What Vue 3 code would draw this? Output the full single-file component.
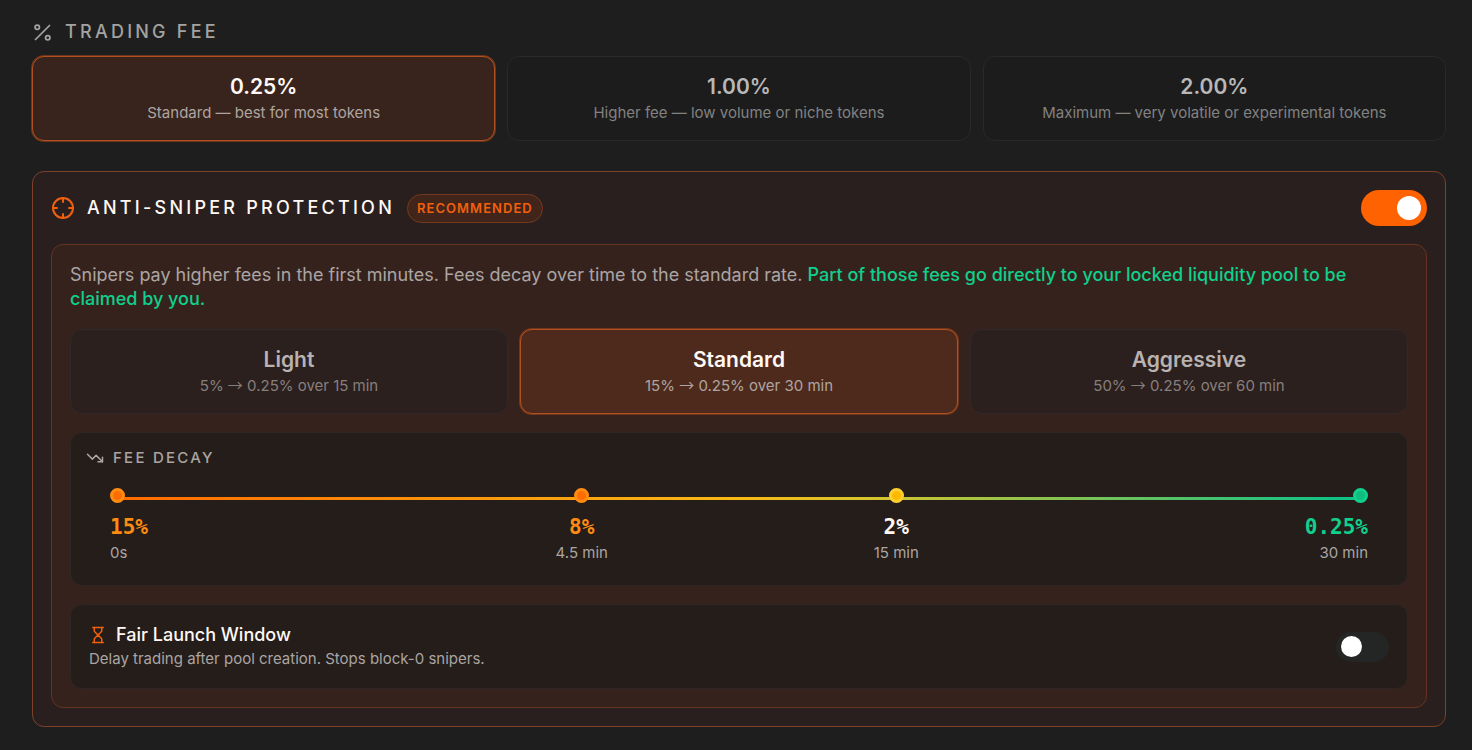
<template>
  <main class="fees">
    <section>
      <h2 class="heading">
        <svg class="icon icon-md" viewBox="0 0 24 24" aria-hidden="true">
          <path d="M20 4L4 20" />
          <circle cx="6" cy="6" r="2.5" />
          <circle cx="18" cy="18" r="2.5" />
        </svg>
        Trading Fee
      </h2>

      <div class="options">
        <button
          v-for="option in feeOptions"
          :key="option.value"
          type="button"
          class="option"
          :class="{ active: fee === option.value }"
          :aria-pressed="fee === option.value"
          @click="fee = option.value"
        >
          <strong>{{ option.value }}</strong>
          <small>{{ option.note }}</small>
        </button>
      </div>
    </section>

    <section class="panel">
      <div class="panel-header">
        <svg class="icon icon-lg accent" viewBox="0 0 24 24" aria-hidden="true">
          <circle cx="12" cy="12" r="10" />
          <path d="M22 12h-4M6 12H2M12 6V2M12 22v-4" />
        </svg>
        <h2 id="sniper-title" class="panel-title">Anti-Sniper Protection</h2>
        <span class="badge">Recommended</span>
        <input
          v-model="protection"
          type="checkbox"
          role="switch"
          class="toggle"
          aria-labelledby="sniper-title"
        />
      </div>

      <div class="panel-body">
        <p class="description">
          Snipers pay higher fees in the first minutes. Fees decay over time to the standard rate.
          <strong>Part of those fees go directly to your locked liquidity pool to be claimed by you.</strong>
        </p>

        <div class="options">
          <button
            v-for="option in presets"
            :key="option.name"
            type="button"
            class="option preset"
            :class="{ active: preset === option.name }"
            :aria-pressed="preset === option.name"
            @click="preset = option.name"
          >
            <strong>{{ option.name }}</strong>
            <small>{{ option.start }} <span class="arrow">→</span> {{ fee }} over {{ option.minutes }} min</small>
          </button>
        </div>

        <div class="card decay">
          <h3 class="decay-title">
            <svg class="icon icon-sm" viewBox="0 0 24 24" aria-hidden="true">
              <path d="M22 17l-8.500-8.500-5 5L2 7" />
              <path d="M16 17h6v-6" />
            </svg>
            Fee Decay
          </h3>

          <ol class="timeline">
            <li v-for="point in decayPoints" :key="point.time" class="point" :class="point.tone">
              <span class="dot"></span>
              <span class="point-value">{{ point.value }}</span>
              <span class="point-time">{{ point.time }}</span>
            </li>
          </ol>
        </div>

        <div class="card launch">
          <div>
            <label for="fair-launch" class="launch-title">
              <svg class="icon icon-sm accent" viewBox="0 0 24 24" aria-hidden="true">
                <path d="M5 22h14M5 2h14" />
                <path d="M17 22v-4.172a2 2 0 0 0-.586-1.414L12 12l-4.414 4.414A2 2 0 0 0 7 17.828V22" />
                <path d="M7 2v4.172a2 2 0 0 0 .586 1.414L12 12l4.414-4.414A2 2 0 0 0 17 6.172V2" />
              </svg>
              Fair Launch Window
            </label>
            <p class="launch-note">Delay trading after pool creation. Stops block-0 snipers.</p>
          </div>
          <input
            id="fair-launch"
            v-model="fairLaunch"
            type="checkbox"
            role="switch"
            class="toggle small"
          />
        </div>
      </div>
    </section>
  </main>
</template>

<script setup>
import { ref } from "vue";

const fee = ref("0.25%");
const preset = ref("Standard");
const protection = ref(true);
const fairLaunch = ref(false);

const feeOptions = [
  { value: "0.25%", note: "Standard — best for most tokens" },
  { value: "1.00%", note: "Higher fee — low volume or niche tokens" },
  { value: "2.00%", note: "Maximum — very volatile or experimental tokens" },
];

const presets = [
  { name: "Light", start: "5%", minutes: 15 },
  { name: "Standard", start: "15%", minutes: 30 },
  { name: "Aggressive", start: "50%", minutes: 60 },
];

const decayPoints = [
  { value: "15%", time: "0s", tone: "orange" },
  { value: "8%", time: "4.5 min", tone: "orange" },
  { value: "2%", time: "15 min", tone: "yellow" },
  { value: "0.25%", time: "30 min", tone: "green" },
];
</script>

<style>
body {
  margin: 0;
  background: #1e1e1e;
}
</style>

<style scoped>
.fees {
  padding: 20px 26px 23px 32px;
  color: #aaa5a3;
  font-family: Inter, "Liberation Sans", sans-serif;
}

.heading,
.panel-title,
.decay-title,
.description,
.launch-note {
  margin: 0;
}

.heading {
  display: flex;
  align-items: center;
  gap: 12px;
  margin-bottom: 12px;
  color: #a3a3a3;
  font-size: 18px;
  font-weight: 500;
  line-height: 24px;
  letter-spacing: 0.18em;
  text-transform: uppercase;
}

.icon {
  flex-shrink: 0;
  fill: none;
  stroke: currentColor;
  stroke-width: 2;
  stroke-linecap: round;
  stroke-linejoin: round;
}

.icon-sm {
  width: 18px;
  height: 18px;
}

.icon-md {
  width: 21px;
  height: 21px;
}

.icon-lg {
  width: 24px;
  height: 24px;
}

.accent {
  color: #f0600d;
}

.options {
  display: grid;
  grid-template-columns: repeat(3, minmax(0, 1fr));
  gap: 12px;
}

.option {
  padding: 16px;
  border: 1px solid #292929;
  border-radius: 12px;
  background: #1c1c1c;
  color: #b8b8b8;
  font-family: inherit;
  text-align: center;
  cursor: pointer;
}

.option strong {
  display: block;
  font-size: 21px;
  font-weight: 600;
  line-height: 28px;
}

.option small {
  display: block;
  color: #828282;
  font-size: 15px;
  line-height: 23px;
}

.arrow {
  font-family: "Noto Sans CJK JP", "Noto Sans", sans-serif;
  line-height: 1;
}

.option.preset {
  border-color: #30292a;
  background: #2b201e;
  color: #b9b2b0;
}

.option.preset small {
  color: #877f7d;
}

.option.active {
  border-color: #b2501f;
  background: #38241c;
  box-shadow: 0 0 0 1px rgba(180, 75, 25, 0.5);
  color: #fff8f4;
}

.option.preset.active {
  border-color: #b2501f;
  background: #4e2a1d;
  color: #fff8f4;
}

.option.active small,
.option.preset.active small {
  color: #aea5a1;
}

.panel {
  margin-top: 30px;
  padding: 18px;
  border: 1px solid #7c4128;
  border-radius: 12px;
  background: #2a1f1f;
}

.panel-header {
  display: flex;
  align-items: center;
  gap: 12px;
  margin-bottom: 18px;
}

.panel-title {
  color: #fff8f4;
  font-size: 18px;
  font-weight: 500;
  line-height: 24px;
  letter-spacing: 0.18em;
  text-transform: uppercase;
}

.badge {
  padding: 3px 9px;
  border: 1px solid #75391e;
  border-radius: 999px;
  background: #41251a;
  color: #f0600d;
  font-size: 13px;
  font-weight: 600;
  line-height: 21px;
  letter-spacing: 0.08em;
  text-transform: uppercase;
}

.toggle {
  appearance: none;
  flex-shrink: 0;
  display: flex;
  align-items: center;
  box-sizing: border-box;
  width: 66px;
  height: 36px;
  margin: 0 0 0 auto;
  padding: 0 6px;
  border-radius: 999px;
  background: #242525;
  cursor: pointer;
}

.toggle::before {
  content: "";
  width: 24px;
  height: 24px;
  border-radius: 50%;
  background: #fff;
}

.toggle:checked {
  justify-content: flex-end;
  background: #ff6200;
}

.toggle.small {
  width: 53px;
  height: 30px;
  padding: 0 5px;
}

.toggle.small::before {
  width: 21px;
  height: 21px;
}

.panel-body {
  display: flex;
  flex-direction: column;
  gap: 18px;
  padding: 18px;
  border: 1px solid #663421;
  border-radius: 12px;
  background: #36221d;
}

.description {
  font-size: 18px;
  line-height: 24px;
}

.description strong {
  color: #0fd08c;
  font-weight: 500;
}

.card {
  border: 1px solid #2e2725;
  border-radius: 12px;
  background: #251d19;
}

.decay {
  padding: 16px 15px 21px;
}

.decay-title {
  display: flex;
  align-items: center;
  gap: 9px;
  font-size: 15px;
  font-weight: 500;
  line-height: 18px;
  letter-spacing: 0.15em;
  text-transform: uppercase;
}

.timeline {
  display: grid;
  grid-template-columns: repeat(4, minmax(0, 1fr));
  margin: 21px 24px 0;
  padding: 0;
  background: linear-gradient(90deg, #ff6a00, #f9b915 50%, #d9c52c 60%, #10c288 98%) center 9px / calc(100% - 12px) 3px no-repeat;
  list-style: none;
}

.point {
  display: flex;
  flex-direction: column;
  align-items: center;
}

.point:first-child {
  align-items: flex-start;
}

.point:last-child {
  align-items: flex-end;
}

.dot {
  box-sizing: border-box;
  width: 15px;
  height: 15px;
  margin-bottom: 10px;
  border: 3px solid #ff8c12;
  border-radius: 50%;
  background: #ff6c00;
}

.point-value {
  color: #ff8c12;
  font-family: "DejaVu Sans Mono", monospace;
  font-size: 21px;
  font-weight: 700;
  line-height: 28px;
}

.point-time {
  font-size: 15px;
  line-height: 23px;
}

.yellow .dot {
  border-color: #ffcf32;
  background: #ffba00;
}

.yellow .point-value {
  color: #fff8f4;
}

.green .dot {
  border-color: #0fd08c;
  background: #10bd81;
}

.green .point-value {
  color: #0fd08c;
}

.launch {
  display: flex;
  align-items: center;
  justify-content: space-between;
  gap: 18px;
  padding: 18px;
}

.launch-title {
  display: flex;
  align-items: center;
  gap: 9px;
  color: #fff8f4;
  font-size: 18px;
  font-weight: 500;
  line-height: 24px;
  cursor: pointer;
}

.launch-note {
  font-size: 15px;
  line-height: 23px;
}

@media (max-width: 760px) {
  .options {
    grid-template-columns: 1fr;
  }

  .panel-header {
    flex-wrap: wrap;
  }
}
</style>
